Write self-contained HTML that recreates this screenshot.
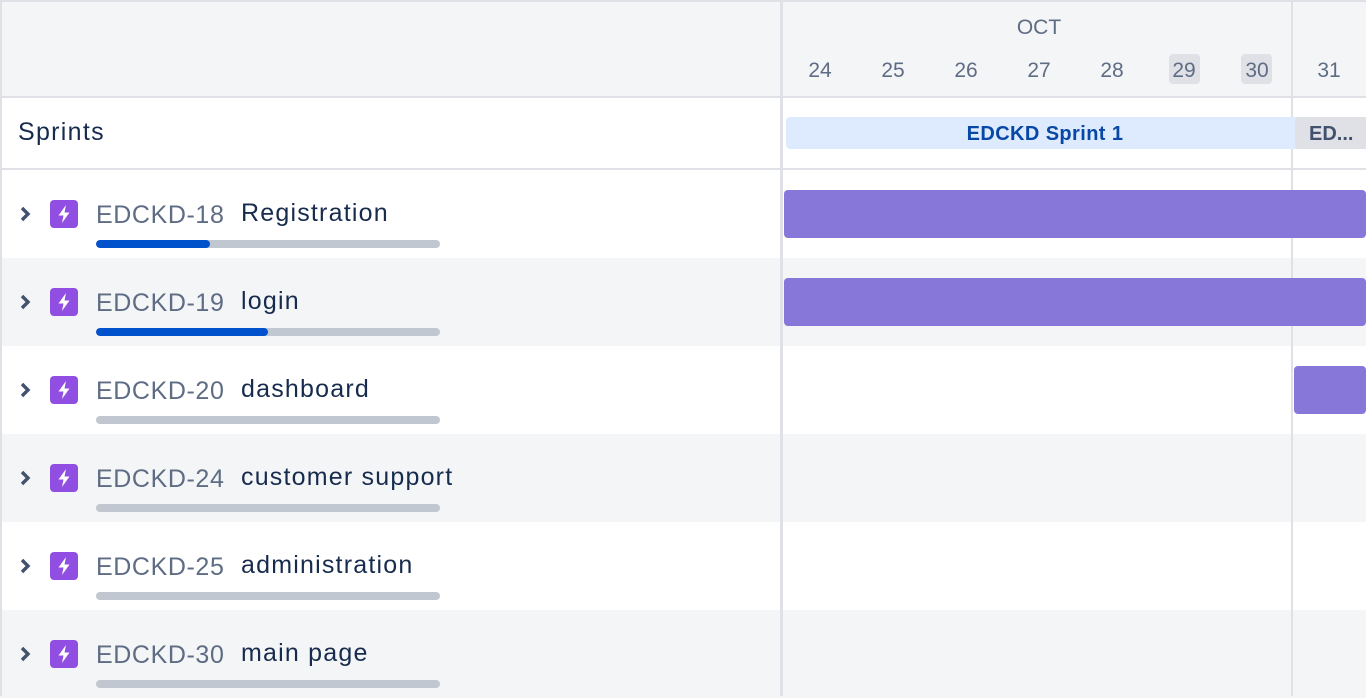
<!DOCTYPE html>
<html><head><meta charset="utf-8"><style>
*{margin:0;padding:0;box-sizing:border-box}
body{width:1366px;height:696px;overflow:hidden;background:#fff;font-family:"Liberation Sans",Arial,sans-serif;position:relative}
.a{position:absolute}
.row{position:absolute;left:0;width:1366px;height:88px}
.id{position:absolute;left:96px;font-size:25px;color:#5e6c84;top:30px;line-height:30px;letter-spacing:0.6px}
.t{position:absolute;left:241px;font-size:25px;color:#172b4d;top:28px;line-height:30px;letter-spacing:1.2px}
.ic{position:absolute;left:50px;top:30px;width:28px;height:28px;background:#904ee2;border-radius:4px}
.ch{position:absolute;left:16px;top:34px}
.pb{position:absolute;left:96px;top:70px;width:344px;height:8px;border-radius:4px;background:#c1c7d0;overflow:hidden}
.pb i{display:block;height:8px;background:#0052cc;border-radius:4px}
.day{position:absolute;top:59px;width:32px;text-align:center;font-size:21px;color:#5e6c84;line-height:24px}
.bar{position:absolute;height:48px;background:#8777d9;border-radius:4px}
</style></head><body>
<div class="a" style="left:0;top:0;width:1366px;height:97px;background:#f4f5f7;border-top:2px solid #dfe1e6"></div>
<div class="a" style="left:0;top:96px;width:1366px;height:2px;background:#dfe1e6"></div>
<div class="a" style="left:0;top:168px;width:1366px;height:2px;background:#dfe1e6"></div>
<div class="row" style="top:258px;background:#f4f5f7"></div>
<div class="row" style="top:434px;background:#f4f5f7"></div>
<div class="row" style="top:610px;background:#f4f5f7"></div>
<div class="a" style="left:0;top:0;width:2px;height:696px;background:#dfe1e6"></div>
<div class="a" style="left:780px;top:0;width:3px;height:696px;background:#dfe1e6"></div>
<div class="a" style="left:1291px;top:0;width:2px;height:696px;background:#dfe1e6"></div>
<div class="a" style="left:1000px;top:16px;width:78px;text-align:center;font-size:21px;color:#5e6c84">OCT</div>
<div class="a" style="left:1169px;top:54px;width:31px;height:30px;background:#dfe1e6;border-radius:4px"></div>
<div class="a" style="left:1241px;top:54px;width:31px;height:30px;background:#dfe1e6;border-radius:4px"></div>
<div class="day" style="left:804px">24</div><div class="day" style="left:877px">25</div><div class="day" style="left:950px">26</div><div class="day" style="left:1023px">27</div><div class="day" style="left:1096px">28</div><div class="day" style="left:1168px">29</div><div class="day" style="left:1241px">30</div><div class="day" style="left:1313px">31</div>
<div class="a" style="left:18px;top:118px;font-size:25px;color:#172b4d;letter-spacing:1.3px">Sprints</div>
<div class="a" style="left:786px;top:117px;width:512px;height:32px;background:#deebff;border-radius:4px 0 0 4px;text-align:center;font-size:20px;font-weight:bold;color:#0747a6;line-height:34px;letter-spacing:0.4px;padding-left:6px">EDCKD Sprint 1</div>
<div class="a" style="left:1295px;top:117px;width:71px;height:32px;background:#dfe1e6;border-radius:4px 0 0 4px;font-size:20px;font-weight:bold;color:#42526e;line-height:34px;padding-left:14px">ED...</div>
<div class="bar" style="left:784px;top:190px;width:582px"></div>
<div class="bar" style="left:784px;top:278px;width:582px"></div>
<div class="bar" style="left:1294px;top:366px;width:72px"></div>
<div class="row" style="top:170px;background:none;width:780px">
<svg class="ch" width="18" height="20" viewBox="0 0 18 20"><path d="M6 4l6 6-6 6" stroke="#42526e" stroke-width="3.4" fill="none"/></svg>
<div class="ic"><svg width="28" height="28" viewBox="0 0 28 28"><path d="M16 5L8.5 15.5h5L12 23l7.5-10.5h-5z" fill="#fff"/></svg></div>
<div class="id">EDCKD-18</div><div class="t">Registration</div><div class="pb"><i style="width:114px"></i></div></div>
<div class="row" style="top:258px;background:none;width:780px">
<svg class="ch" width="18" height="20" viewBox="0 0 18 20"><path d="M6 4l6 6-6 6" stroke="#42526e" stroke-width="3.4" fill="none"/></svg>
<div class="ic"><svg width="28" height="28" viewBox="0 0 28 28"><path d="M16 5L8.5 15.5h5L12 23l7.5-10.5h-5z" fill="#fff"/></svg></div>
<div class="id">EDCKD-19</div><div class="t">login</div><div class="pb"><i style="width:172px"></i></div></div>
<div class="row" style="top:346px;background:none;width:780px">
<svg class="ch" width="18" height="20" viewBox="0 0 18 20"><path d="M6 4l6 6-6 6" stroke="#42526e" stroke-width="3.4" fill="none"/></svg>
<div class="ic"><svg width="28" height="28" viewBox="0 0 28 28"><path d="M16 5L8.5 15.5h5L12 23l7.5-10.5h-5z" fill="#fff"/></svg></div>
<div class="id">EDCKD-20</div><div class="t">dashboard</div><div class="pb"></div></div>
<div class="row" style="top:434px;background:none;width:780px">
<svg class="ch" width="18" height="20" viewBox="0 0 18 20"><path d="M6 4l6 6-6 6" stroke="#42526e" stroke-width="3.4" fill="none"/></svg>
<div class="ic"><svg width="28" height="28" viewBox="0 0 28 28"><path d="M16 5L8.5 15.5h5L12 23l7.5-10.5h-5z" fill="#fff"/></svg></div>
<div class="id">EDCKD-24</div><div class="t">customer support</div><div class="pb"></div></div>
<div class="row" style="top:522px;background:none;width:780px">
<svg class="ch" width="18" height="20" viewBox="0 0 18 20"><path d="M6 4l6 6-6 6" stroke="#42526e" stroke-width="3.4" fill="none"/></svg>
<div class="ic"><svg width="28" height="28" viewBox="0 0 28 28"><path d="M16 5L8.5 15.5h5L12 23l7.5-10.5h-5z" fill="#fff"/></svg></div>
<div class="id">EDCKD-25</div><div class="t">administration</div><div class="pb"></div></div>
<div class="row" style="top:610px;background:none;width:780px">
<svg class="ch" width="18" height="20" viewBox="0 0 18 20"><path d="M6 4l6 6-6 6" stroke="#42526e" stroke-width="3.4" fill="none"/></svg>
<div class="ic"><svg width="28" height="28" viewBox="0 0 28 28"><path d="M16 5L8.5 15.5h5L12 23l7.5-10.5h-5z" fill="#fff"/></svg></div>
<div class="id">EDCKD-30</div><div class="t">main page</div><div class="pb"></div></div>
</body></html>
